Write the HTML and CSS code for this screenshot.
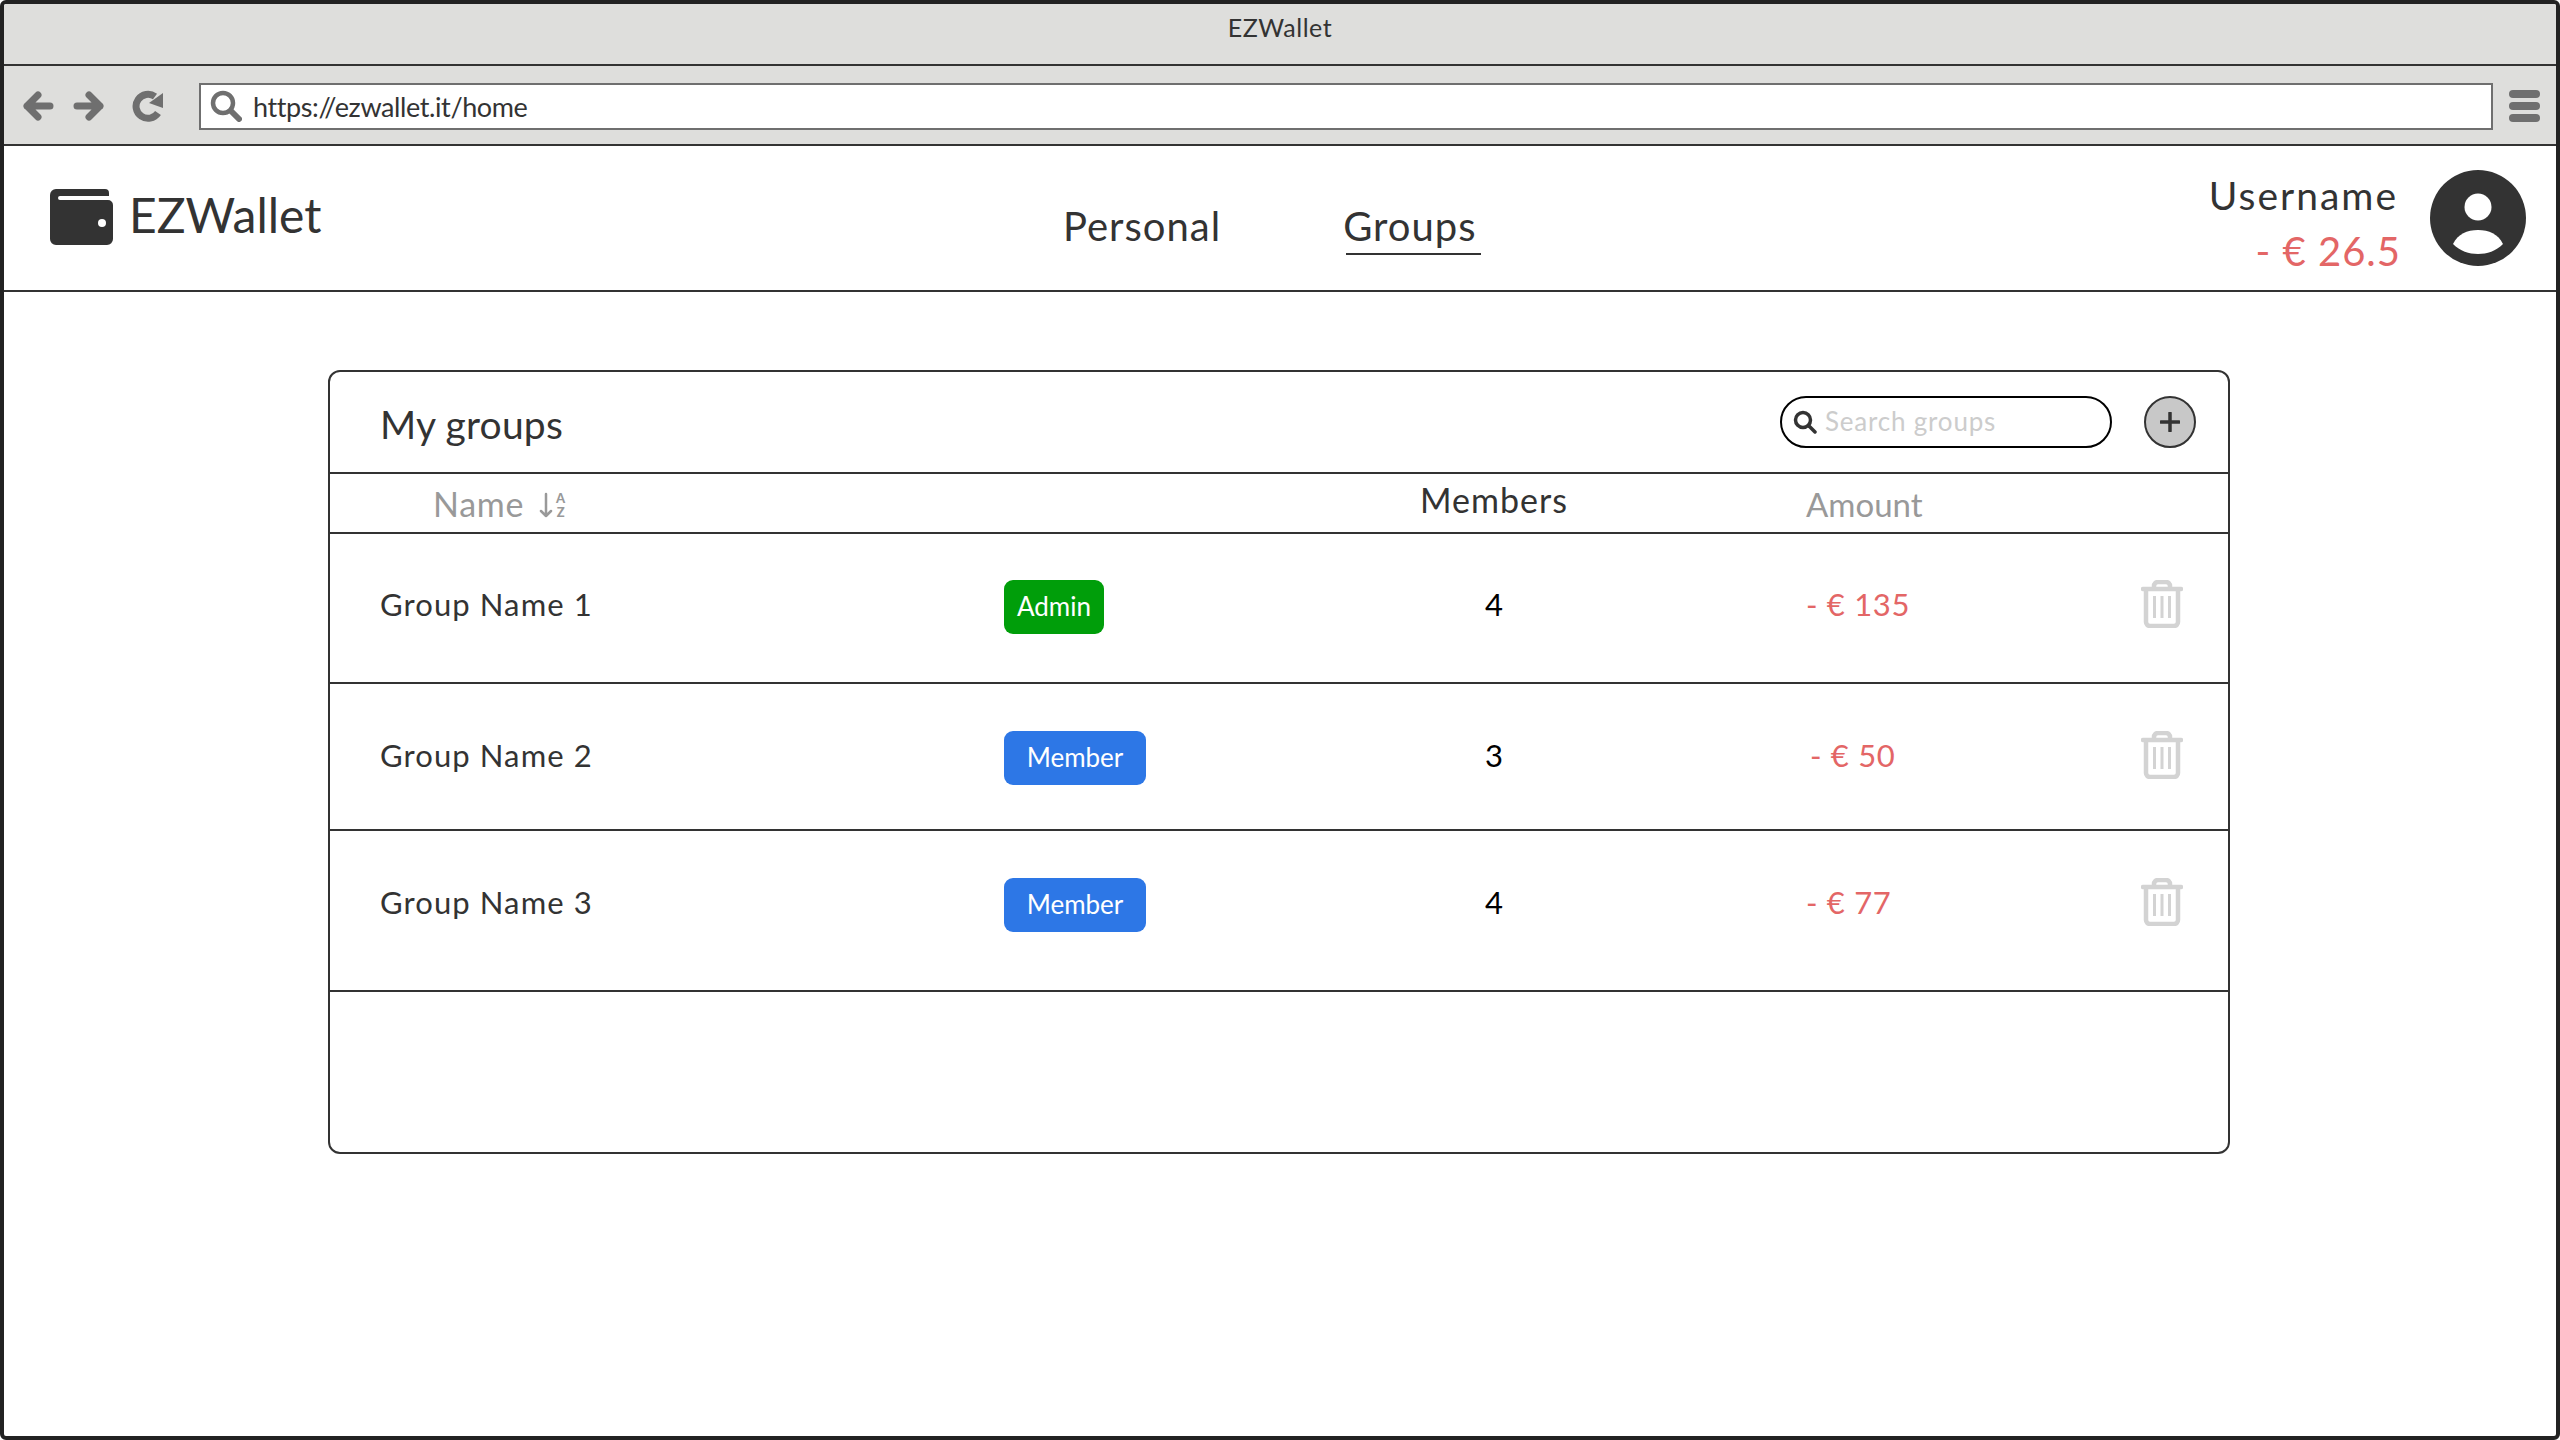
FILE: index.html
```html
<!DOCTYPE html>
<html lang="en">
<head>
  <meta charset="UTF-8">
  <title>EZWallet</title>
  <link rel="stylesheet" href="styles.css">
</head>
<body>

  <div class="window">
    <div class="title-bar">EZWallet</div>

    <div class="toolbar">
      <svg class="tool-icon" viewBox="0 0 32 32"><path d="M28 16H5M16 5 5 16l11 11" class="tool-stroke"/></svg>
      <svg class="tool-icon" viewBox="0 0 32 32"><path d="M4 16h23M16 5l11 11-11 11" class="tool-stroke"/></svg>
      <svg class="tool-icon reload" viewBox="0 0 32 32"><path d="M26 23A12 12 0 1 1 23 6.500" class="tool-stroke butt"/><path d="M31 3V18L17 13Z" class="tool-fill"/></svg>
      <div class="address">
        <svg class="tool-icon" viewBox="0 0 32 32"><circle cx="13" cy="13" r="10" class="lens"/><path d="M21 21l8 8" class="lens round"/></svg>
        <span>https://ezwallet.it/home</span>
      </div>
      <div class="menu-bars"><i></i><i></i><i></i></div>
    </div>

    <header class="app-header">
      <div class="logo">
        <svg class="wallet" viewBox="0 0 63 56"><path d="M6 0H55a4 4 0 0 1 4 4V7H10a2 2 0 0 0 0 4H58a5 5 0 0 1 5 5V50a6 6 0 0 1-6 6H6a6 6 0 0 1-6-6V6a6 6 0 0 1 6-6Z"/><circle cx="52" cy="34" r="4" fill="#fff"/></svg>
        <span class="logo-text">EZWallet</span>
      </div>
      <nav class="nav">
        <a class="nav-item">Personal</a>
        <a class="nav-item active">Groups</a>
      </nav>
      <div class="user">
        <div class="user-name">Username</div>
        <div class="user-balance">- € 26.5</div>
      </div>
      <svg class="avatar" viewBox="0 0 96 96">
        <circle cx="48" cy="48" r="48" fill="#333"/>
        <circle cx="48" cy="37" r="13.500" fill="#fff"/>
        <path d="M23 74C28 64 37 60 48 60S68 64 73 74C66 81 57 84 48 84S30 81 23 74Z" fill="#fff"/>
      </svg>
    </header>

    <main class="content">
      <section class="panel">
        <div class="panel-head">
          <h2>My groups</h2>
          <div class="search">
            <svg class="search-icon" viewBox="0 0 24 24"><circle cx="10" cy="10" r="7.500"/><path d="M16 16l6 6"/></svg>
            <span class="search-text">Search groups</span>
          </div>
          <div class="add-btn"><svg viewBox="0 0 20 20"><path d="M10 1V19M1 10H19"/></svg></div>
        </div>

        <div class="table-head row-grid">
          <div class="col-name">
            Name
            <span class="sort">
              <svg class="sort-arrow" viewBox="0 0 14 28"><path d="M7 3V25M2 20l5 5 5-5"/></svg>
              <span class="sort-letters"><span>A</span><span>Z</span></span>
            </span>
          </div>
          <div></div>
          <div class="col-members">Members</div>
          <div class="col-amount">Amount</div>
        </div>

        <div class="group-row row-grid">
          <div class="group-name">Group Name 1</div>
          <div><span class="badge admin">Admin</span></div>
          <div class="group-count">4</div>
          <div class="group-amount">- € 135</div>
          <svg class="trash" viewBox="0 0 42 48"><use href="#trash-shape"/></svg>
        </div>
        <div class="group-row row-grid">
          <div class="group-name">Group Name 2</div>
          <div><span class="badge member">Member</span></div>
          <div class="group-count">3</div>
          <div class="group-amount nudge">- € 50</div>
          <svg class="trash" viewBox="0 0 42 48"><use href="#trash-shape"/></svg>
        </div>
        <div class="group-row row-grid">
          <div class="group-name">Group Name 3</div>
          <div><span class="badge member">Member</span></div>
          <div class="group-count">4</div>
          <div class="group-amount">- € 77</div>
          <svg class="trash" viewBox="0 0 42 48"><use href="#trash-shape"/></svg>
        </div>
      </section>
    </main>
  </div>

  <svg class="defs" width="0" height="0">
    <symbol id="trash-shape" viewBox="0 0 42 48">
      <path d="M2 9H40M13 8V6a4 4 0 0 1 4-4H25a4 4 0 0 1 4 4V8M5 10V42a4 4 0 0 0 4 4H33a4 4 0 0 0 4-4V10" fill="none" stroke="#d3d3d3" stroke-width="4.500" stroke-linecap="round"/>
      <path d="M13.500 16V38M21 16V38M28.500 16V38" fill="none" stroke="#d3d3d3" stroke-width="3"/>
    </symbol>
  </svg>

</body>
</html>
```

FILE: styles.css
```css
* {
  box-sizing: border-box;
}

body {
  margin: 0;
  font-family: 'Lato', 'Liberation Sans', sans-serif;
  color: #333;
  background: #fff;
}

.defs {
  position: absolute;
}

.window {
  height: 1440px;
  overflow: hidden;
  border: 4px solid #222;
  border-radius: 6px;
  background: #fff;
}

.title-bar {
  height: 62px;
  background: #dededc;
  border-bottom: 2px solid #333;
  text-align: center;
  font-size: 25px;
  letter-spacing: .5px;
  line-height: 46px;
}

.toolbar {
  height: 80px;
  display: flex;
  align-items: center;
  background: #dededc;
  border-bottom: 2px solid #333;
  padding: 2px 16px 0 18px;
}

.tool-icon {
  width: 32px;
  height: 32px;
  flex: none;
}

.toolbar > .tool-icon {
  margin-right: 19px;
}

.toolbar > .reload {
  margin-left: 8px;
  margin-right: 35px;
}

.tool-stroke {
  fill: none;
  stroke: #6f6f6f;
  stroke-width: 7;
  stroke-linecap: round;
  stroke-linejoin: round;
}

.butt {
  stroke-linecap: butt;
}

.tool-fill {
  fill: #6f6f6f;
}

.lens {
  fill: none;
  stroke: #6f6f6f;
  stroke-width: 4.500;
}

.round {
  stroke-width: 6;
  stroke-linecap: round;
}

.address {
  flex: 0 0 2294px;
  height: 47px;
  display: flex;
  align-items: center;
  gap: 11px;
  padding-left: 9px;
  background: #fff;
  border: 2px solid #6f6f6f;
  font-size: 27px;
  letter-spacing: -.4px;
}

.menu-bars {
  margin-left: 16px;
  width: 32px;
}

.menu-bars i {
  display: block;
  height: 8px;
  margin-bottom: 4px;
  background: #6f6f6f;
  border-radius: 4px;
}

.menu-bars i:last-child {
  margin-bottom: 0;
}

.app-header {
  height: 146px;
  display: flex;
  align-items: flex-start;
  border-bottom: 2px solid #333;
  padding-left: 46px;
  padding-right: 30px;
}

.logo {
  flex: 0 0 1013px;
  display: flex;
  align-items: center;
  gap: 16px;
  padding-top: 43px;
  font-size: 48px;
}

.logo-text {
  margin-top: -6px;
}

.wallet {
  width: 63px;
  height: 56px;
  fill: #333;
}

.nav {
  display: flex;
  gap: 122px;
  padding-top: 56px;
  font-size: 40px;
  letter-spacing: 1px;
}

.nav-item {
  display: block;
  position: relative;
}

.nav-item.active::after {
  content: "";
  position: absolute;
  left: 3px;
  right: -4px;
  bottom: -5px;
  height: 2px;
  background: #333;
}

.user {
  margin-left: auto;
  padding-top: 24px;
  text-align: right;
}

.user-name {
  font-size: 39px;
  line-height: 50px;
  letter-spacing: 2px;
}

.user-balance {
  font-size: 40px;
  line-height: 50px;
  letter-spacing: 1px;
  color: #e36666;
  margin-top: 6px;
  margin-right: -3px;
}

.avatar {
  width: 96px;
  height: 96px;
  margin-left: 32px;
  margin-top: 24px;
}

.content {
  padding: 78px 0 0 324px;
}

.panel {
  width: 1902px;
  height: 784px;
  border: 2px solid #333;
  border-radius: 12px;
}

.panel-head {
  height: 102px;
  display: flex;
  align-items: center;
  padding-left: 50px;
  border-bottom: 2px solid #333;
}

.panel-head h2 {
  margin: 0 0 -4px;
  font-size: 39px;
  font-weight: 400;
  letter-spacing: .2px;
}

.search {
  margin-left: auto;
  width: 332px;
  height: 52px;
  display: flex;
  align-items: center;
  gap: 8px;
  padding-left: 11px;
  border: 2px solid #000;
  border-radius: 26px;
  font-size: 26px;
  letter-spacing: .8px;
  color: #ccc;
}

.search-text {
  margin-top: -2px;
}

.search-icon {
  width: 24px;
  height: 24px;
  flex: none;
  fill: none;
  stroke: #333;
  stroke-width: 3.500;
  stroke-linecap: round;
}

.add-btn {
  width: 52px;
  height: 52px;
  margin-left: 32px;
  margin-right: 32px;
  display: flex;
  align-items: center;
  justify-content: center;
  background: #c8c8c8;
  border: 2px solid #333;
  border-radius: 50%;
}

.add-btn svg {
  width: 20px;
  height: 20px;
  fill: none;
  stroke: #333;
  stroke-width: 3.500;
  stroke-linecap: round;
}

.row-grid {
  display: grid;
  grid-template-columns: 624px 300px 380px 1fr 42px;
  padding-left: 50px;
  padding-right: 45px;
}

.table-head {
  height: 60px;
  align-items: center;
  border-bottom: 2px solid #333;
  font-size: 33px;
}

.col-name {
  display: flex;
  align-items: center;
  gap: 15px;
  padding-left: 53px;
  font-size: 34px;
  letter-spacing: .7px;
  color: #999;
}

.sort {
  display: flex;
  align-items: center;
  gap: 3px;
  margin-top: 4px;
}

.sort-arrow {
  width: 14px;
  height: 28px;
  fill: none;
  stroke: #999;
  stroke-width: 2.500;
  stroke-linecap: round;
  stroke-linejoin: round;
}

.sort-letters {
  display: flex;
  flex-direction: column;
  align-items: center;
  font-size: 13px;
  font-weight: 900;
  line-height: 14px;
  letter-spacing: 0;
}

.col-members {
  text-align: center;
  margin-top: -7px;
  font-size: 34px;
  letter-spacing: 1px;
}

.col-amount {
  padding-left: 122px;
  margin-top: 1px;
  color: #999;
}

.group-row {
  height: 147px;
  padding-top: 47px;
  align-items: start;
  border-bottom: 2px solid #333;
  font-size: 31px;
}

.group-row:nth-child(3) {
  padding-top: 46px;
  height: 150px;
}

.group-row:nth-child(5) {
  height: 161px;
}

.group-name,
.group-count,
.group-amount {
  line-height: 48px;
}

.group-name {
  letter-spacing: 1.100px;
}

.group-count {
  text-align: center;
  color: #000;
}

.group-amount {
  padding-left: 122px;
  letter-spacing: .7px;
  color: #e36666;
}

.nudge {
  padding-left: 126px;
}

.badge {
  display: inline-block;
  height: 54px;
  line-height: 52px;
  border-radius: 9px;
  color: #fff;
  font-size: 26px;
  text-align: center;
}

.badge.admin {
  width: 100px;
  background: #009e0a;
}

.badge.member {
  width: 142px;
  background: #2d77e6;
}

.trash {
  width: 42px;
  height: 48px;
}
```
